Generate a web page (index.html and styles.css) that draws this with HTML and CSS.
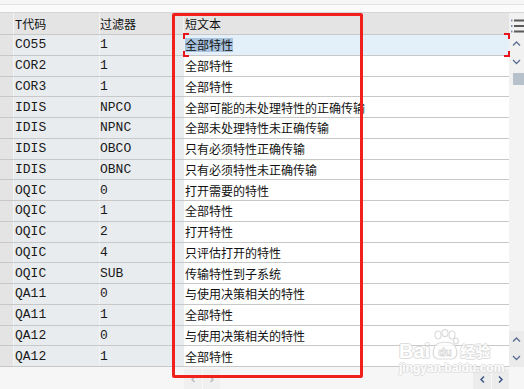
FILE: index.html
```html
<!DOCTYPE html>
<html lang="zh-CN">
<head>
<meta charset="utf-8">
<title>短文本</title>
<link rel="stylesheet" href="styles.css">
</head>
<body>
<div class="screen">
  <div class="topbar"><div class="tb-a"></div><div class="tb-b"></div></div>
  <div class="main">
    <div class="grid">
      <div class="row head"><div class="c rh"></div><div class="c c1">T代码</div><div class="c c2">过滤器</div><div class="c c3">短文本</div></div>
      <div class="row"><div class="c rh"></div><div class="c c1 mono">CO55</div><div class="c c2 mono">1</div><div class="c c3 sel"><span class="hl">全部特性</span><i class="mk tl"></i><i class="mk bl"></i><i class="mk tr"></i><i class="mk br"></i></div></div>
      <div class="row"><div class="c rh"></div><div class="c c1 mono">COR2</div><div class="c c2 mono">1</div><div class="c c3">全部特性</div></div>
      <div class="row"><div class="c rh"></div><div class="c c1 mono">COR3</div><div class="c c2 mono">1</div><div class="c c3">全部特性</div></div>
      <div class="row"><div class="c rh"></div><div class="c c1 mono">IDIS</div><div class="c c2 mono">NPCO</div><div class="c c3">全部可能的未处理特性的正确传输</div></div>
      <div class="row"><div class="c rh"></div><div class="c c1 mono">IDIS</div><div class="c c2 mono">NPNC</div><div class="c c3">全部未处理特性未正确传输</div></div>
      <div class="row"><div class="c rh"></div><div class="c c1 mono">IDIS</div><div class="c c2 mono">OBCO</div><div class="c c3">只有必须特性正确传输</div></div>
      <div class="row"><div class="c rh"></div><div class="c c1 mono">IDIS</div><div class="c c2 mono">OBNC</div><div class="c c3">只有必须特性未正确传输</div></div>
      <div class="row"><div class="c rh"></div><div class="c c1 mono">OQIC</div><div class="c c2 mono">0</div><div class="c c3">打开需要的特性</div></div>
      <div class="row"><div class="c rh"></div><div class="c c1 mono">OQIC</div><div class="c c2 mono">1</div><div class="c c3">全部特性</div></div>
      <div class="row"><div class="c rh"></div><div class="c c1 mono">OQIC</div><div class="c c2 mono">2</div><div class="c c3">打开特性</div></div>
      <div class="row"><div class="c rh"></div><div class="c c1 mono">OQIC</div><div class="c c2 mono">4</div><div class="c c3">只评估打开的特性</div></div>
      <div class="row"><div class="c rh"></div><div class="c c1 mono">OQIC</div><div class="c c2 mono">SUB</div><div class="c c3">传输特性到子系统</div></div>
      <div class="row"><div class="c rh"></div><div class="c c1 mono">QA11</div><div class="c c2 mono">0</div><div class="c c3">与使用决策相关的特性</div></div>
      <div class="row"><div class="c rh"></div><div class="c c1 mono">QA11</div><div class="c c2 mono">1</div><div class="c c3">全部特性</div></div>
      <div class="row"><div class="c rh"></div><div class="c c1 mono">QA12</div><div class="c c2 mono">0</div><div class="c c3">与使用决策相关的特性</div></div>
      <div class="row"><div class="c rh"></div><div class="c c1 mono">QA12</div><div class="c c2 mono">1</div><div class="c c3">全部特性</div></div>
    </div>
    <div class="vscroll">
      <div class="vs-menu">
        <svg width="15" height="22" viewBox="0 0 15 22">
          <g stroke-width="2">
            <path d="M2 7.5h1.5M2 13h1.5M2 18.5h1.5" stroke="#7a8fb0"/>
            <path d="M5 7.5h10M5 13h10M5 18.5h10" stroke="#5a5a5a"/>
          </g>
        </svg>
      </div>
      <div class="vs-btn"><svg width="15" height="18" viewBox="0 0 15 18"><path d="M4 10.5l3.5-3.5 3.5 3.5" fill="none" stroke="#5b6f92" stroke-width="1.3"/></svg></div>
      <div class="vs-btn"><svg width="15" height="18" viewBox="0 0 15 18"><path d="M4 7l3.5 3.5 3.5-3.5" fill="none" stroke="#5b6f92" stroke-width="1.3"/></svg></div>
      <div class="vs-thumb"></div>
      <div class="vs-fill"></div>
      <div class="vs-btn dark"><svg width="15" height="18" viewBox="0 0 15 18"><path d="M4 10.5l3.5-3.5 3.5 3.5" fill="none" stroke="#5b6f92" stroke-width="1.3"/></svg></div>
      <div class="vs-btn dark"><svg width="15" height="18" viewBox="0 0 15 18"><path d="M4 7l3.5 3.5 3.5-3.5" fill="none" stroke="#5b6f92" stroke-width="1.3"/></svg></div>
    </div>
  </div>
  <div class="bottombar">
    <div class="hs-gap"></div>
    <div class="hs-pair faint">
      <div class="hs-btn"><svg width="18" height="20" viewBox="0 0 18 20"><path d="M10.5 8l-2.5 2.5 2.5 2.5" fill="none" stroke="#b4b8c0" stroke-width="1.3"/></svg></div>
      <div class="hs-btn"><svg width="18" height="20" viewBox="0 0 18 20"><path d="M7.5 8l2.5 2.5-2.5 2.5" fill="none" stroke="#b4b8c0" stroke-width="1.3"/></svg></div>
    </div>
    <div class="hs-fill"></div>
    <div class="hs-pair">
      <div class="hs-btn"><svg width="18" height="20" viewBox="0 0 18 20"><path d="M11 7.5l-3 3 3 3" fill="none" stroke="#3d5688" stroke-width="1.5"/></svg></div>
      <div class="hs-btn"><svg width="18" height="20" viewBox="0 0 18 20"><path d="M7 7.5l3 3-3 3" fill="none" stroke="#3d5688" stroke-width="1.5"/></svg></div>
    </div>
    <div class="hs-corner"></div>
  </div>
  <div class="redbox"></div>
  <div class="watermark">
    <div class="wm-top">
      <span class="wm-bai">Bai</span>
      <svg class="wm-paw" width="28" height="32" viewBox="0 0 28 32">
        <g fill="#fff" stroke="#d6d6d6" stroke-width="1.2">
          <ellipse cx="7" cy="6" rx="3" ry="4"/>
          <ellipse cx="14" cy="4" rx="3" ry="3.6"/>
          <ellipse cx="21" cy="6" rx="3" ry="4"/>
          <ellipse cx="25" cy="12" rx="2.4" ry="3"/>
          <path d="M4 17c3-5 17-5 20 0 3 5 3 13-4 13H8C1 30 1 22 4 17z"/>
        </g>
        <text x="14" y="27" text-anchor="middle" class="wm-du">du</text>
      </svg>
      <span class="wm-jy">经验</span>
    </div>
    <div class="wm-url">jingyan.baidu.com</div>
  </div>
</div>
</body>
</html>
```
FILE: styles.css
```css
html, body {
  margin: 0;
  padding: 0;
  background: #f6f6f6;
}

.screen {
  position: relative;
  width: 524px;
  height: 389px;
  overflow: hidden;
  display: flex;
  flex-direction: column;
  font-family: "Noto Sans CJK SC", "DejaVu Sans", sans-serif;
  font-size: 12px;
  color: #111;
}

.topbar {
  height: 13px;
  flex: none;
  display: flex;
  flex-direction: column;
}
.tb-a {
  height: 4px;
  background: #f6f6f6;
  border-bottom: 1px solid #e2e2e2;
}
.tb-b {
  height: 7px;
  background: #fbfbfb;
  border-bottom: 1px solid #d6d6d6;
}

.main {
  display: flex;
  height: 354px;
  flex: none;
}

.grid {
  width: 509px;
  display: flex;
  flex-direction: column;
}

.row {
  display: grid;
  grid-template-columns: 14px 86px 84px 325px;
  height: 20.75px;
  box-sizing: border-box;
  border-bottom: 1px solid #c8c8c8;
}
.row.head {
  height: 22px;
  background: #e4e4e4;
}

.c {
  display: flex;
  align-items: center;
  white-space: nowrap;
  overflow: hidden;
  box-sizing: border-box;
}
.rh {
  background: #e4e4e4;
  border-right: 1px solid #f4f4f4;
}
.c1 {
  background: #e9ecef;
  border-right: 1px solid #f3f4f6;
  padding-left: 1px;
}
.c2 {
  background: #e9ecef;
  padding-left: 0;
}
.c3 {
  background: #fff;
  padding-left: 1px;
}
.head .c1, .head .c2, .head .c3 {
  background: #e4e4e4;
  border-right: 1px solid #f2f2f2;
  padding-bottom: 1px;
}
.head .c3 {
  border-right: none;
}

.mono {
  font-family: "Liberation Mono", "DejaVu Sans Mono", monospace;
  font-size: 13px;
  color: #1a1a1a;
}

.sel {
  position: relative;
  overflow: visible;
  background: #e4f0f9;
}
.hl {
  display: inline-block;
  line-height: 14px;
  background: #a9c3de;
}
.mk {
  position: absolute;
  width: 4px;
  height: 4px;
  border: 0 solid #e8141a;
}
.mk.tl { left: -1px; top: -2px; border-top-width: 2px; border-left-width: 2px; }
.mk.bl { left: -1px; bottom: -2px; border-bottom-width: 2px; border-left-width: 2px; }
.mk.tr { right: -1px; top: -2px; border-top-width: 2px; border-right-width: 2px; }
.mk.br { right: -1px; bottom: -2px; border-bottom-width: 2px; border-right-width: 2px; }

.vscroll {
  width: 15px;
  display: flex;
  flex-direction: column;
  background: #f1f1f1;
}
.vs-menu {
  height: 22px;
  flex: none;
}
.vs-menu svg, .vs-btn svg, .hs-btn svg {
  display: block;
}
.vs-btn {
  height: 18px;
  flex: none;
}
.vs-btn.dark {
  background: #ebebeb;
}
.vs-thumb {
  height: 12px;
  margin: 2px 0 0 4px;
  background: #b7c1cb;
  flex: none;
}
.vs-fill {
  flex: 1;
  background: #f3f3f3;
}

.bottombar {
  height: 22px;
  flex: none;
  display: flex;
  background: #f6f6f6;
}
.hs-gap {
  width: 184px;
  flex: none;
}
.hs-pair {
  width: 36px;
  margin-top: 2px;
  display: flex;
  background: #ececec;
  flex: none;
}
.hs-pair.faint {
  background: #f0f0f0;
}
.hs-btn {
  width: 18px;
  height: 20px;
}
.hs-btn + .hs-btn {
  border-left: 1px solid #f8f8f8;
  width: 17px;
}
.hs-fill {
  flex: 1;
}
.hs-corner {
  width: 15px;
  flex: none;
}

.redbox {
  position: absolute;
  left: 172px;
  top: 13px;
  width: 185px;
  height: 359px;
  border: 3px solid #f0201c;
  border-radius: 2px;
  pointer-events: none;
}

.watermark {
  position: absolute;
  left: 399px;
  top: 329px;
  width: 100px;
  opacity: 0.85;
  pointer-events: none;
}
.wm-top {
  display: flex;
  align-items: flex-end;
  height: 32px;
}
.wm-bai, .wm-jy {
  font-family: "Liberation Sans", "Noto Sans CJK SC", sans-serif;
  font-size: 20px;
  font-weight: bold;
  line-height: 18px;
  color: #fff;
  text-shadow: 1px 0 0 #d6d6d6, -1px 0 0 #d6d6d6, 0 1px 0 #d6d6d6, 0 -1px 0 #d6d6d6;
  padding-bottom: 1px;
}
.wm-jy {
  font-family: "Noto Sans CJK SC", sans-serif;
  font-size: 15px;
  margin-left: 1px;
}
.wm-paw {
  margin-left: 1px;
}
.wm-du {
  font-family: "Liberation Sans", sans-serif;
  font-size: 11px;
  font-weight: bold;
  fill: #fff;
  stroke: #d0d0d0;
  stroke-width: 0.8;
}
.wm-url {
  font-family: "Liberation Sans", sans-serif;
  font-size: 12px;
  font-weight: bold;
  line-height: 12px;
  color: #fff;
  margin-top: 1px;
  text-shadow: 1px 0 0 #dcdcdc, -1px 0 0 #dcdcdc, 0 1px 0 #dcdcdc, 0 -1px 0 #dcdcdc;
}
```
